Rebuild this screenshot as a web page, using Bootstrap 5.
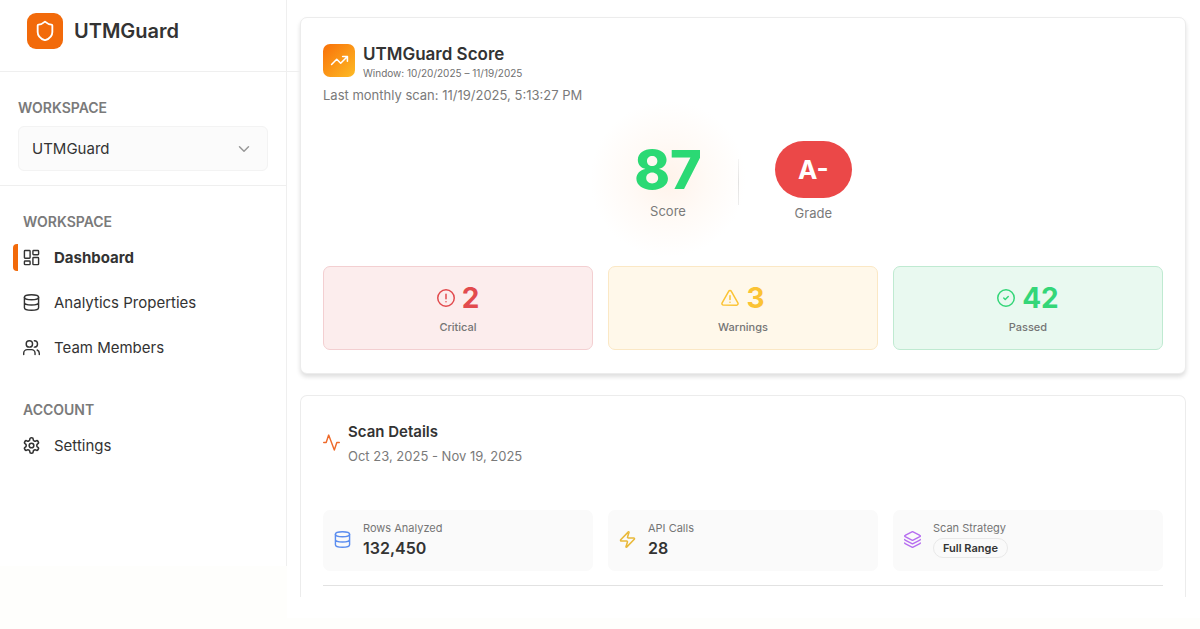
<!DOCTYPE html>
<html lang="en">
<head>
<meta charset="utf-8">
<meta name="viewport" content="width=device-width, initial-scale=1">
<title>UTMGuard Dashboard</title>
<link href="https://cdn.jsdelivr.net/npm/bootstrap@5.3.0/dist/css/bootstrap.min.css" rel="stylesheet">
<style>
  :root { --ink: #333; --muted: #7a7a7a; --line: #efefef; --accent: #f26a0a; }
  body { background: #fefefc; color: var(--ink); font-family: Inter, "Liberation Sans", sans-serif; font-size: 15px; line-height: 24px; }
  svg { display: block; flex: none; fill: none; stroke: currentColor; stroke-width: 2; stroke-linecap: round; stroke-linejoin: round; }

  /* Sidebar */
  .sidebar { width: 287px; min-height: 566px; background: #fff; border-right: 1px solid var(--line); z-index: 1; }
  .brand { height: 72px; margin-right: -14px; padding: 0 0 10px 27px; gap: 11px; border-bottom: 1px solid var(--line); color: var(--ink); font-size: 20px; font-weight: 600; }
  .brand:hover { color: var(--ink); }
  .brand-mark { width: 36px; height: 36px; border-radius: 9px; background: var(--accent); color: #fff; }
  .switcher { padding: 24px 18px 14px; border-bottom: 1px solid var(--line); }
  .section-label { display: block; color: var(--muted); font-size: 14px; line-height: 24px; font-weight: 600; margin: 0; }
  .workspace-select { height: 45px; margin-top: 6px; padding: 2px 40px 0 13px; font-size: 15px; color: var(--ink); border-color: #f3f3f3; border-radius: 6px; background-color: #fbfbfb;
    background-image: url("data:image/svg+xml,%3Csvg xmlns='http://www.w3.org/2000/svg' viewBox='0 0 24 24' fill='none' stroke='%23999' stroke-width='2' stroke-linecap='round' stroke-linejoin='round'%3E%3Cpath d='m6 9 6 6 6-6'/%3E%3C/svg%3E"); background-size: 18px; background-position: right 14px center; }
  .side-nav { padding: 24px 14px 0; }
  .side-nav .section-label { padding-left: 9px; margin-bottom: 1px; }
  .side-nav .nav-link { position: relative; display: flex; align-items: center; gap: 14px; height: 45px; padding: 0 9px; color: var(--ink); }
  .side-nav .nav-link.active { font-weight: 700; }
  .side-nav .nav-link.active::before { content: ""; position: absolute; left: -1px; top: 9px; width: 5px; height: 27px; background: var(--accent); border-radius: 4px 0 0 4px; }
  .side-nav .nav + .section-label { margin-top: 28px; }

  /* Main column */
  .main-col { background: #fff; padding: 17px 14px 21px 13px; min-width: 0; }
  .panel { background: #fff; border: 1px solid #ececec; border-radius: 7px; padding: 0 22px; }
  .panel-score { padding-top: 26px; padding-bottom: 23px; box-shadow: 0 3px 4px rgba(0,0,0,.13); }
  .panel-scan { margin-top: 21px; padding-top: 24px; padding-bottom: 11px; border-bottom: 0; border-radius: 7px 7px 0 0; }
  .score-mark { width: 32px; height: 33px; border-radius: 7px; background: linear-gradient(135deg, #f97008, #fdbb25); color: #fff; }
  .panel-title { font-size: 17px; line-height: 20px; font-weight: 600; margin: 0; }
  .panel-scan .panel-title { font-size: 15px; line-height: 24px; }
  .tiny { font-size: 11px; line-height: 16px; color: #757575; }
  .window-range { font-size: 10px; line-height: 19px; color: #707070; }
  .note { font-size: 13px; line-height: 24px; color: var(--muted); }
  .score-row { gap: 36px; margin-top: 34px; }
  .score-block { position: relative; isolation: isolate; }
  .score-block::before { content: ""; position: absolute; z-index: -1; inset: -40px -44px -32px; background: radial-gradient(closest-side, #fff3ea, #fffaf6 50%, #fffaf600); }
  .score-value { font-size: 54px; line-height: 58px; font-weight: 800; color: #2bd974; }
  .divider-v { width: 1px; height: 46px; margin-top: 18px; background: linear-gradient(#f3f3f3, #dcdcdc, #ececec); }
  .grade-pill { width: 77px; height: 57px; margin-bottom: 3px; border-radius: 29px; background: #eb4848; color: #fff; font-size: 26px; line-height: 57px; font-weight: 700; }
  .tile-row { --bs-gutter-x: 15px; --bs-gutter-y: 15px; }
  .stats { margin-top: 26px; }
  .stat { height: 84px; padding-top: 13px; border: 1px solid; border-radius: 7px; }
  .stat-value { gap: 7px; font-size: 28px; line-height: 36px; font-weight: 700; }
  .stat .tiny { line-height: 22px; font-weight: 500; }
  .stat-critical { background: #fceded; border-color: #f3cfd1; }
  .stat-critical .stat-value { color: #e24b4e; }
  .stat-warning { background: #fff8ea; border-color: #fbe8c5; }
  .stat-warning .stat-value { color: #fbc334; }
  .stat-passed { background: #e9f9f0; border-color: #bfead1; }
  .stat-passed .stat-value { color: #34d678; }
  .metrics { margin-top: 27px; }
  .metric { height: 61px; gap: 12px; padding: 0 11px 2px; background: #fafafa; border-radius: 7px; }
  .metric-value { font-size: 16px; line-height: 24px; min-height: 24px; font-weight: 600; }
  .pill { display: inline-block; font-size: 11px; line-height: 18px; font-weight: 600; padding: 0 9px; border: 1px solid #e9e9e9; border-radius: 10px; }
  .rule { border-top: 1px solid #e2e2e2; margin-top: 14px; }
  .tone-orange { color: #ee6a2a; }
  .tone-blue { color: #5b8def; }
  .tone-gold { color: #e9b93a; }
  .tone-purple { color: #b66df0; }
</style>
</head>
<body>
<svg width="0" height="0" class="position-absolute" aria-hidden="true">
  <symbol id="i-db" viewBox="0 0 24 24"><ellipse cx="12" cy="4.500" rx="10" ry="3.500"/><path d="M2 4.500v15a10 3.500 0 0 0 20 0v-15M2 12a10 3.500 0 0 0 20 0"/></symbol>
</svg>
<div class="d-flex align-items-start">
  <aside class="sidebar flex-shrink-0">
    <a href="#" class="brand d-flex align-items-center text-decoration-none">
      <span class="brand-mark d-flex align-items-center justify-content-center">
        <svg width="22" height="22" viewBox="0 0 24 24"><path d="M20 13c0 5-3.500 7.500-7.660 8.950a1 1 0 0 1-.67-.01C7.500 20.500 4 18 4 13V6a1 1 0 0 1 1-1c2 0 4.500-1.200 6.240-2.720a1.170 1.170 0 0 1 1.520 0C14.510 3.810 17 5 19 5a1 1 0 0 1 1 1z"/></svg>
      </span>
      UTMGuard
    </a>
    <div class="switcher">
      <label class="section-label" for="workspace">WORKSPACE</label>
      <select class="form-select workspace-select" id="workspace"><option>UTMGuard</option></select>
    </div>
    <nav class="side-nav">
      <h2 class="section-label">WORKSPACE</h2>
      <div class="nav flex-column">
        <a class="nav-link active" href="#" aria-current="page"><svg width="17" height="17" viewBox="0 0 24 24"><rect x="2" y="2" width="8" height="11" rx="1"/><rect x="14" y="2" width="8" height="6" rx="1"/><rect x="14" y="12" width="8" height="10" rx="1"/><rect x="2" y="17" width="8" height="5" rx="1"/></svg>Dashboard</a>
        <a class="nav-link" href="#"><svg width="17" height="17"><use href="#i-db"/></svg>Analytics Properties</a>
        <a class="nav-link" href="#"><svg width="17" height="17" viewBox="0 0 24 24"><path d="M17 22v-2a5 5 0 0 0-5-5H6a5 5 0 0 0-5 5v2"/><circle cx="9" cy="7" r="4.500"/><path d="M23 22v-2a5 5 0 0 0-3-4.500M16 2.500a4.500 4.500 0 0 1 0 9"/></svg>Team Members</a>
      </div>
      <h2 class="section-label">ACCOUNT</h2>
      <div class="nav flex-column">
        <a class="nav-link" href="#"><svg width="17" height="17" viewBox="1 1 22 22"><path d="M12.220 2h-.44a2 2 0 0 0-2 2v.18a2 2 0 0 1-1 1.730l-.43.25a2 2 0 0 1-2 0l-.15-.08a2 2 0 0 0-2.730.73l-.22.38a2 2 0 0 0 .73 2.730l.15.1a2 2 0 0 1 1 1.720v.51a2 2 0 0 1-1 1.740l-.15.09a2 2 0 0 0-.73 2.730l.22.38a2 2 0 0 0 2.730.73l.15-.08a2 2 0 0 1 2 0l.43.25a2 2 0 0 1 1 1.730V20a2 2 0 0 0 2 2h.44a2 2 0 0 0 2-2v-.18a2 2 0 0 1 1-1.730l.43-.25a2 2 0 0 1 2 0l.15.08a2 2 0 0 0 2.730-.73l.22-.39a2 2 0 0 0-.73-2.730l-.15-.08a2 2 0 0 1-1-1.740v-.5a2 2 0 0 1 1-1.740l.15-.09a2 2 0 0 0 .73-2.730l-.22-.38a2 2 0 0 0-2.730-.73l-.15.08a2 2 0 0 1-2 0l-.43-.25a2 2 0 0 1-1-1.730V4a2 2 0 0 0-2-2z"/><circle cx="12" cy="12" r="3"/></svg>Settings</a>
      </div>
    </nav>
  </aside>

  <main class="main-col flex-grow-1">
    <section class="panel panel-score">
      <div class="d-flex align-items-start gap-2">
        <span class="score-mark d-flex align-items-center justify-content-center">
          <svg width="19" height="19" viewBox="0 0 24 24"><path d="m2 17 6.500-6.500 5 5L22 7M16 7h6v6"/></svg>
        </span>
        <div>
          <h1 class="panel-title">UTMGuard Score</h1>
          <div class="window-range">Window: 10/20/2025 – 11/19/2025</div>
        </div>
      </div>
      <div class="note">Last monthly scan: 11/19/2025, 5:13:27 PM</div>

      <div class="score-row d-flex justify-content-center text-center">
        <div class="score-block">
          <div class="score-value">87</div>
          <div class="note">Score</div>
        </div>
        <div class="divider-v"></div>
        <div>
          <div class="grade-pill">A-</div>
          <div class="note">Grade</div>
        </div>
      </div>

      <div class="row tile-row stats text-center">
        <div class="col-4"><div class="stat stat-critical">
          <div class="stat-value d-flex align-items-center justify-content-center"><svg width="18" height="18" viewBox="0 0 24 24"><circle cx="12" cy="12" r="11"/><path d="M12 7v6M12 17h.01"/></svg>2</div>
          <div class="tiny">Critical</div>
        </div></div>
        <div class="col-4"><div class="stat stat-warning">
          <div class="stat-value d-flex align-items-center justify-content-center"><svg width="18" height="18" viewBox="0 0 24 24"><path d="m22.500 18.500-8.700-15.300a2 2 0 0 0-3.600 0L1.500 18.500A2 2 0 0 0 3.200 21.500h17.600a2 2 0 0 0 1.700-3M12 9v5M12 17.500h.01"/></svg>3</div>
          <div class="tiny">Warnings</div>
        </div></div>
        <div class="col-4"><div class="stat stat-passed">
          <div class="stat-value d-flex align-items-center justify-content-center"><svg width="18" height="18" viewBox="0 0 24 24"><circle cx="12" cy="12" r="11"/><path d="m9 12 2 2 4-4"/></svg>42</div>
          <div class="tiny">Passed</div>
        </div></div>
      </div>
    </section>

    <section class="panel panel-scan">
      <div class="d-flex align-items-center gap-2">
        <svg class="tone-orange mb-1" width="17" height="17" viewBox="0 0 24 24"><path d="M23 12h-3.500l-3.500 10.500L8 1.500 4.500 12H1"/></svg>
        <div>
          <h2 class="panel-title">Scan Details</h2>
          <div class="note">Oct 23, 2025 - Nov 19, 2025</div>
        </div>
      </div>
      <div class="row tile-row metrics">
        <div class="col-4"><div class="metric d-flex align-items-center">
          <svg class="tone-blue" width="17" height="17"><use href="#i-db"/></svg>
          <div><div class="tiny">Rows Analyzed</div><div class="metric-value">132,450</div></div>
        </div></div>
        <div class="col-4"><div class="metric d-flex align-items-center">
          <svg class="tone-gold" width="17" height="17" viewBox="1 1 22 22"><path d="M4 14a1 1 0 0 1-.78-1.630l9.900-10.200a.5.5 0 0 1 .86.46l-1.920 6.020A1 1 0 0 0 13 10h7a1 1 0 0 1 .78 1.630l-9.900 10.200a.5.5 0 0 1-.86-.46l1.920-6.020A1 1 0 0 0 11 14z"/></svg>
          <div><div class="tiny">API Calls</div><div class="metric-value">28</div></div>
        </div></div>
        <div class="col-4"><div class="metric d-flex align-items-center">
          <svg class="tone-purple" width="17" height="17" viewBox="0 0 24 24"><path d="M12.830 1.180a2 2 0 0 0-1.660 0L1.600 6.080a1 1 0 0 0 0 1.830l9.580 4.900a2 2 0 0 0 1.660 0l9.580-4.900a1 1 0 0 0 0-1.830ZM1 12a1 1 0 0 0 .58.910l9.600 4.800a2 2 0 0 0 1.650 0l9.580-4.800A1 1 0 0 0 23 12M1 17a1 1 0 0 0 .58.910l9.600 4.800a2 2 0 0 0 1.650 0l9.580-4.800A1 1 0 0 0 23 17"/></svg>
          <div><div class="tiny">Scan Strategy</div><div class="metric-value d-flex align-items-center"><span class="pill">Full Range</span></div></div>
        </div></div>
      </div>
      <div class="rule"></div>
    </section>
  </main>
</div>
<script src="https://cdn.jsdelivr.net/npm/bootstrap@5.3.0/dist/js/bootstrap.bundle.min.js"></script>
</body>
</html>
